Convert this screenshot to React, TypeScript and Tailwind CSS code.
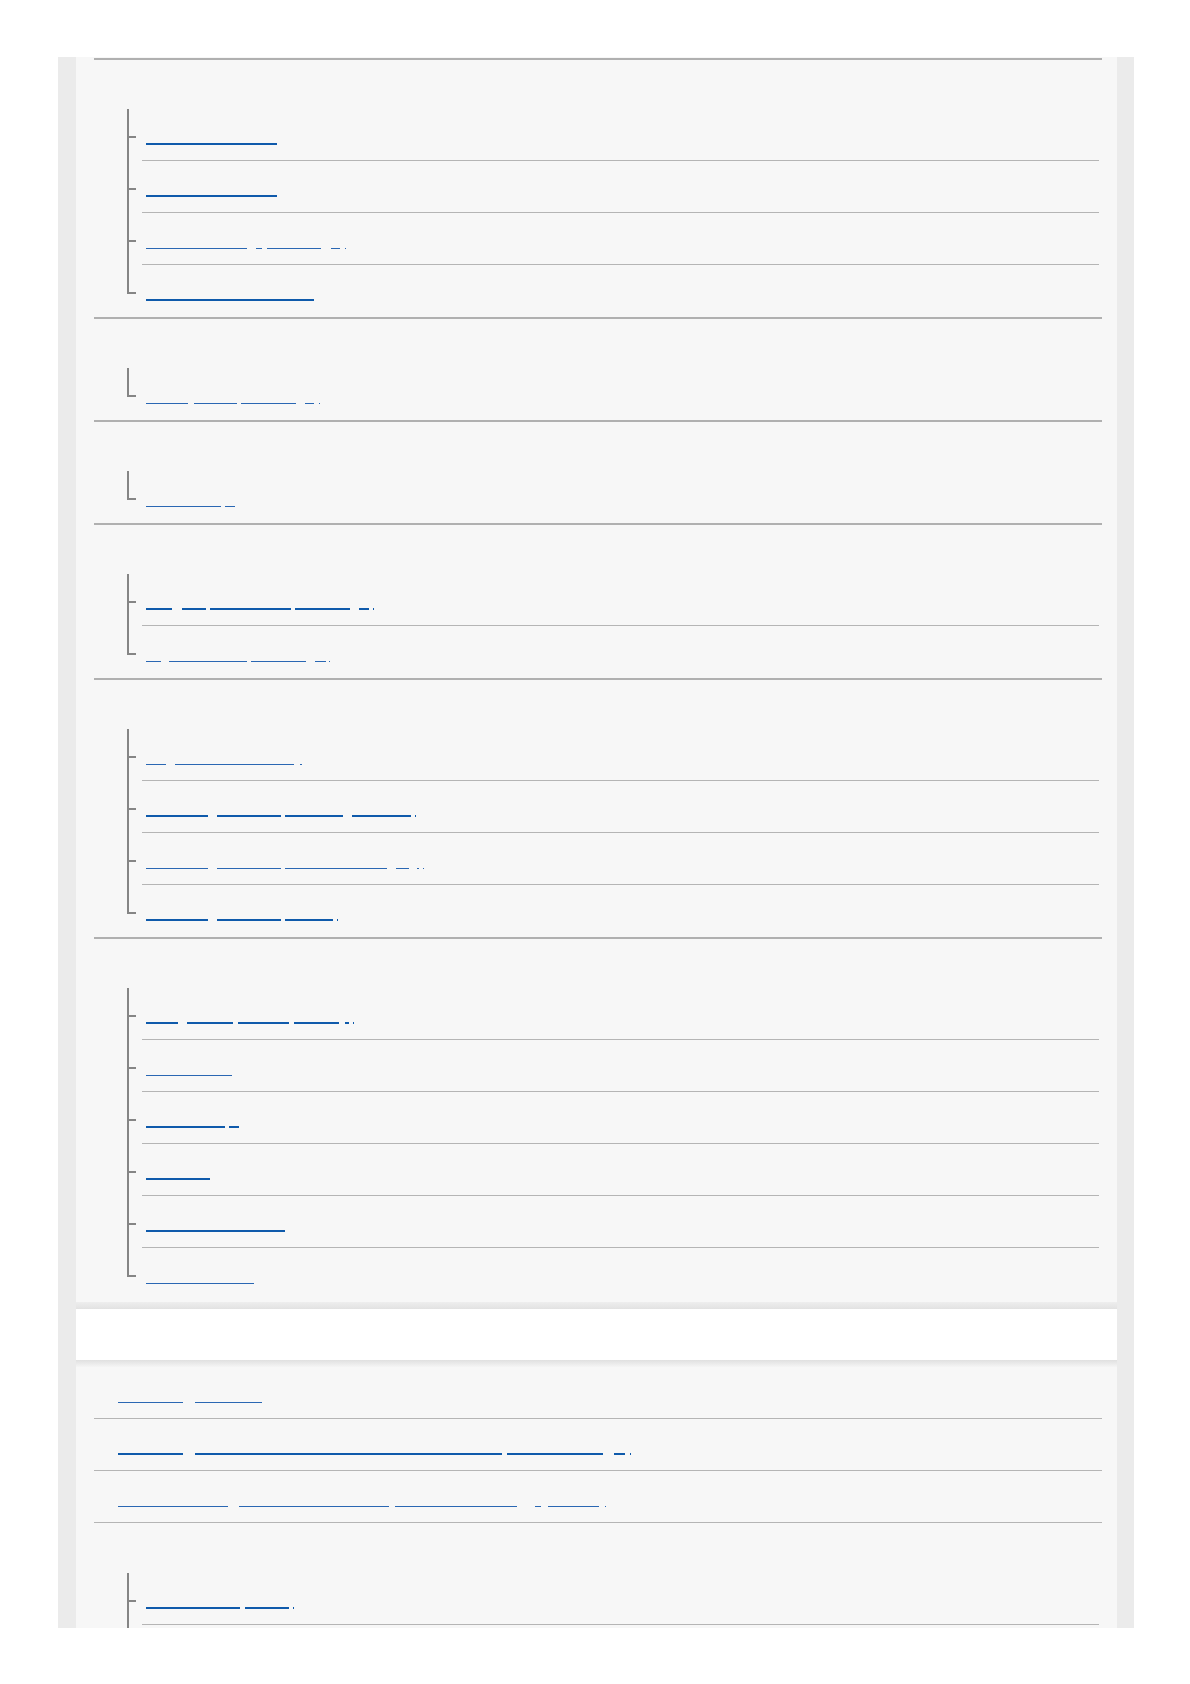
import React from "react";

type Seg = [number, number];

interface Row {
  words: string[];
  segs: Seg[];
  thin?: boolean;
}

interface Section {
  title: string;
  rows: Row[];
}

const sections: Section[] = [
  {
    title: "Shooting",
    rows: [
      { words: ["Shooting stills"], segs: [[146, 277]] },
      { words: ["Recording movies"], segs: [[146, 277]] },
      {
        words: ["Selecting a focus", "/", "method", "AF", "."],
        segs: [[146, 247], [256, 262], [267, 321], [331, 340], [345, 346]],
        thin: true,
      },
      { words: ["Using the touch functions"], segs: [[146, 314]] },
    ],
  },
  {
    title: "Playback",
    rows: [
      {
        words: ["View", "images", "on a TV", "4K", "."],
        segs: [[146, 188], [194, 237], [241, 296], [305, 314], [319, 320]],
        thin: true,
      },
    ],
  },
  {
    title: "Protecting",
    rows: [{ words: ["Protect images", "1"], segs: [[146, 221], [225, 235]], thin: true }],
  },
  {
    title: "Image settings",
    rows: [
      {
        words: ["Set", "the", "image quality", "file format", "JPG", "."],
        segs: [[146, 172], [182, 206], [210, 291], [295, 350], [359, 369], [373, 374]],
      },
      {
        words: ["A", "Creative Look", "settings", "HDR", "."],
        segs: [[146, 161], [169, 247], [251, 306], [315, 326], [329, 330]],
        thin: true,
      },
    ],
  },
  {
    title: "Connecting",
    rows: [
      { words: ["Wi", "Fi connection setting", "."], segs: [[146, 166], [175, 294], [300, 302]], thin: true },
      {
        words: ["Connect", "to a smart", "phone via", "Bluetooth", "."],
        segs: [[146, 208], [217, 281], [285, 343], [352, 411], [415, 416]],
      },
      {
        words: ["Connect", "to a smart", "phone remote control", "PC", ".", "."],
        segs: [[146, 208], [217, 281], [285, 387], [396, 409], [417, 419], [423, 424]],
        thin: true,
      },
      {
        words: ["Connect", "to a smart", "phone QR", "."],
        segs: [[146, 208], [217, 281], [285, 333], [337, 338]],
      },
    ],
  },
  {
    title: "Maintenance",
    rows: [
      {
        words: ["Use", "the camera", "abroad", "with care", "I", "."],
        segs: [[146, 178], [187, 233], [238, 289], [294, 339], [345, 349], [353, 354]],
      },
      { words: ["Battery pack"], segs: [[146, 232]], thin: true },
      { words: ["Memory card", "s"], segs: [[146, 225], [229, 239]] },
      { words: ["Lens care"], segs: [[146, 210]] },
      { words: ["Cleaning the image sensor"], segs: [[146, 285]] },
      { words: ["Specifications"], segs: [[146, 254]], thin: true },
    ],
  },
];

const flatRows: Row[] = [
  { words: ["Notes on", "use"], segs: [[118, 183], [195, 262]], thin: true },
  {
    words: ["Notes on", "handling the camera and the product in general", "temperature", "V", "."],
    segs: [[118, 183], [195, 502], [507, 603], [614, 625], [630, 631]],
  },
  {
    words: ["Trademarks", "licences for the software", "used in this product", "-", "notices", "."],
    segs: [[118, 228], [239, 389], [395, 517], [535, 541], [548, 599], [605, 606]],
    thin: true,
  },
];

const lastSection: Section = {
  title: "Troubleshooting",
  rows: [
    { words: ["Troubleshooting", "guide", "."], segs: [[146, 240], [245, 289], [293, 294]] },
    // next entry is cut off by the bottom of the frame
    { words: [""], segs: [] },
  ],
};

function LinkLine({ row, start }: { row: Row; start: number }) {
  let prev = start;
  return (
    <a href="#" className="flex h-[16px] items-start">
      {row.segs.map(([a, b], i) => {
        const gap = a - prev;
        prev = b;
        return (
          <span
            key={i}
            className={`block h-[16px] shrink-0 overflow-hidden whitespace-nowrap text-[11px] leading-[14px] text-transparent ${
              row.thin ? "border-b border-[#2a67b3]" : "border-b-2 border-[#0f5aab]"
            }`}
            style={{ marginLeft: gap, width: b - a }}
          >
            {row.words[i] ?? ""}
          </span>
        );
      })}
    </a>
  );
}

function TreeList({ rows }: { rows: Row[] }) {
  return (
    <ul className="ml-[33px]">
      {rows.map((row, i) => {
        const last = i === rows.length - 1;
        return (
          <li key={i} className="flex">
            <div className="flex w-[15px] shrink-0 flex-col">
              <div className="h-[29px] w-[9px] border-b-2 border-l-2 border-[#858585]" />
              {!last && <div className="w-[9px] flex-1 border-l-2 border-[#858585]" />}
            </div>
            <div
              className={`mr-[3px] h-[52px] flex-1 pl-[4px] pt-[20px] ${
                last ? "" : "border-b border-[#b5b5b5]"
              }`}
            >
              <LinkLine row={row} start={146} />
            </div>
          </li>
        );
      })}
    </ul>
  );
}

export default function App() {
  return (
    <div className="min-h-screen w-full bg-white font-['Liberation_Sans',Arial,sans-serif]">
      <div className="ml-[58px] mt-[57px] h-[1571px] w-[1076px] overflow-hidden bg-[#ebebeb] pl-[18px] pr-[17px]">
        {/* Upper panel */}
        <div className="bg-[#f7f7f7] pb-[2px] pl-[18px] pr-[15px] pt-px">
          {sections.map((s) => (
            <section key={s.title} className="border-t-2 border-[#b0b0b0]">
              <h2 className="h-[49px] pt-[14px] text-[15px] text-transparent">{s.title}</h2>
              <TreeList rows={s.rows} />
            </section>
          ))}
        </div>
        <div className="h-[7px] bg-linear-to-b from-[#eeeeee] to-[#e2e2e2]" />

        {/* Spacer band */}
        <div className="h-[51px] bg-white" />

        {/* Lower panel */}
        <div className="bg-[#f7f7f7]">
          <div className="h-[7px] bg-linear-to-b from-[#e0e0e0] to-[#f5f5f5]" />
          <div className="pl-[18px] pr-[15px]">
            <ul>
              {flatRows.map((row, i) => (
                <li key={i} className="h-[52px] border-b border-[#b5b5b5] pl-[24px] pt-[20px]">
                  <LinkLine row={row} start={118} />
                </li>
              ))}
            </ul>
            <section>
              <h2 className="h-[50px] pt-[14px] text-[15px] text-transparent">{lastSection.title}</h2>
              <TreeList rows={lastSection.rows} />
            </section>
          </div>
        </div>
      </div>
    </div>
  );
}
